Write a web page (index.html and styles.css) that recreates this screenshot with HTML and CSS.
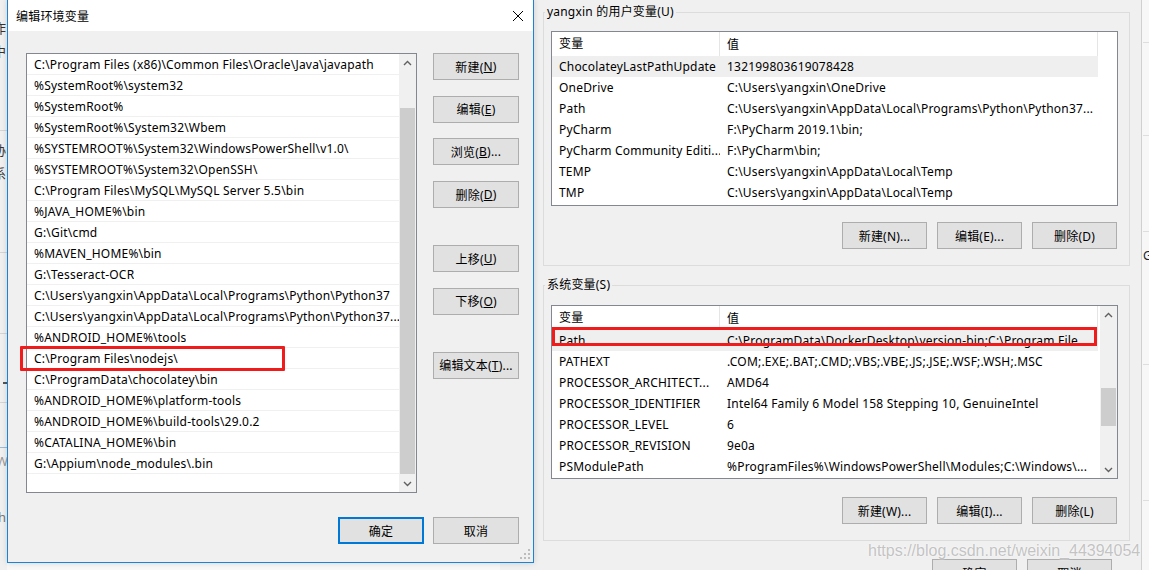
FILE: index.html
```html
<!DOCTYPE html>
<html lang="zh-CN">
  <head>
    <meta charset="utf-8">
    <title>编辑环境变量</title>
    <link rel="stylesheet" href="styles.css">
  </head>
  <body>
    <!-- slivers of whatever sits behind, left edge -->
    <div class="behind-left">
      <span class="sliver-ch ch-1">作</span>
      <span class="sliver-ch ch-2">中</span>
      <hr class="sliver-line line-1">
      <span class="sliver-ch ch-3">协</span>
      <span class="sliver-ch ch-4">系</span>
      <hr class="sliver-line line-2">
      <hr class="sliver-line line-3">
      <hr class="sliver-line line-4 dark">
      <hr class="sliver-line line-5">
      <hr class="sliver-line line-6 blue">
      <span class="sliver-ch ch-5">W</span>
      <span class="sliver-ch ch-6">h</span>
    </div>

    <div class="behind-right">
      <hr class="edge-line e1">
      <hr class="edge-line e2">
      <hr class="edge-line e3">
      <span class="edge-text">Gl</span>
      <hr class="edge-line e4">
      <hr class="edge-line e5">
    </div>

    <!-- environment variables window -->
    <div class="envwin">
      <fieldset class="group">
        <legend>yangxin 的用户变量(U)</legend>
        <div class="listview lv-user">
          <div class="lv-main">
            <div class="lv-head"><span class="c-name">变量</span><span class="c-value">值</span></div>
            <ul class="lv-rows">
              <li class="lv-row is-selected"><span class="c-name">ChocolateyLastPathUpdate</span><span class="c-value">132199803619078428</span></li>
              <li class="lv-row"><span class="c-name">OneDrive</span><span class="c-value">C:\Users\yangxin\OneDrive</span></li>
              <li class="lv-row"><span class="c-name">Path</span><span class="c-value">C:\Users\yangxin\AppData\Local\Programs\Python\Python37...</span></li>
              <li class="lv-row"><span class="c-name">PyCharm</span><span class="c-value">F:\PyCharm 2019.1\bin;</span></li>
              <li class="lv-row"><span class="c-name">PyCharm Community Editi...</span><span class="c-value">F:\PyCharm\bin;</span></li>
              <li class="lv-row"><span class="c-name">TEMP</span><span class="c-value">C:\Users\yangxin\AppData\Local\Temp</span></li>
              <li class="lv-row"><span class="c-name">TMP</span><span class="c-value">C:\Users\yangxin\AppData\Local\Temp</span></li>
            </ul>
          </div>
        </div>
        <div class="btn-row">
          <button class="btn btn--wide">新建(N)...</button>
          <button class="btn btn--wide">编辑(E)...</button>
          <button class="btn btn--wide">删除(D)</button>
        </div>
      </fieldset>

      <fieldset class="group group--sys">
        <legend>系统变量(S)</legend>
        <div class="listview lv-sys">
          <div class="lv-main">
            <div class="lv-head"><span class="c-name">变量</span><span class="c-value">值</span></div>
            <ul class="lv-rows">
              <li class="lv-row is-selected is-marked"><span class="c-name">Path</span><span class="c-value">C:\ProgramData\DockerDesktop\version-bin;C:\Program File...</span></li>
              <li class="lv-row"><span class="c-name">PATHEXT</span><span class="c-value">.COM;.EXE;.BAT;.CMD;.VBS;.VBE;.JS;.JSE;.WSF;.WSH;.MSC</span></li>
              <li class="lv-row"><span class="c-name">PROCESSOR_ARCHITECT...</span><span class="c-value">AMD64</span></li>
              <li class="lv-row"><span class="c-name">PROCESSOR_IDENTIFIER</span><span class="c-value">Intel64 Family 6 Model 158 Stepping 10, GenuineIntel</span></li>
              <li class="lv-row"><span class="c-name">PROCESSOR_LEVEL</span><span class="c-value">6</span></li>
              <li class="lv-row"><span class="c-name">PROCESSOR_REVISION</span><span class="c-value">9e0a</span></li>
              <li class="lv-row"><span class="c-name">PSModulePath</span><span class="c-value">%ProgramFiles%\WindowsPowerShell\Modules;C:\Windows\...</span></li>
            </ul>
          </div>
          <div class="scrollbar sb-sys">
            <div class="sb-btn"><svg width="9" height="6" viewBox="0 0 9 6"><path d="M1 5 L4.5 1.5 L8 5" fill="none" stroke="#606060" stroke-width="1.4"/></svg></div>
            <div class="sb-track"><div class="sb-thumb"></div></div>
            <div class="sb-btn"><svg width="9" height="6" viewBox="0 0 9 6"><path d="M1 1 L4.5 4.5 L8 1" fill="none" stroke="#606060" stroke-width="1.4"/></svg></div>
          </div>
        </div>
        <div class="btn-row">
          <button class="btn btn--wide">新建(W)...</button>
          <button class="btn btn--wide">编辑(I)...</button>
          <button class="btn btn--wide">删除(L)</button>
        </div>
      </fieldset>

      <div class="env-footer">
        <button class="btn btn--wide">确定</button>
        <button class="btn btn--wide">取消</button>
      </div>
    </div>

    <!-- edit dialog on top -->
    <div class="dialog">
      <div class="titlebar">
        <span class="title">编辑环境变量</span>
        <span class="close">
          <svg width="10" height="10" viewBox="0 0 10 10"><path d="M0 0 L10 10 M10 0 L0 10" stroke="#000" stroke-width="1"/></svg>
        </span>
      </div>

      <div class="dlg-body">
        <div class="pathlist">
          <ul class="path-rows">
            <li><span class="txt">C:\Program Files (x86)\Common Files\Oracle\Java\javapath</span></li>
            <li><span class="txt">%SystemRoot%\system32</span></li>
            <li><span class="txt">%SystemRoot%</span></li>
            <li><span class="txt">%SystemRoot%\System32\Wbem</span></li>
            <li><span class="txt">%SYSTEMROOT%\System32\WindowsPowerShell\v1.0\</span></li>
            <li><span class="txt">%SYSTEMROOT%\System32\OpenSSH\</span></li>
            <li><span class="txt">C:\Program Files\MySQL\MySQL Server 5.5\bin</span></li>
            <li><span class="txt">%JAVA_HOME%\bin</span></li>
            <li><span class="txt">G:\Git\cmd</span></li>
            <li><span class="txt">%MAVEN_HOME%\bin</span></li>
            <li><span class="txt">G:\Tesseract-OCR</span></li>
            <li><span class="txt">C:\Users\yangxin\AppData\Local\Programs\Python\Python37</span></li>
            <li><span class="txt">C:\Users\yangxin\AppData\Local\Programs\Python\Python37...</span></li>
            <li><span class="txt">%ANDROID_HOME%\tools</span></li>
            <li class="is-marked"><span class="txt">C:\Program Files\nodejs\</span></li>
            <li><span class="txt">C:\ProgramData\chocolatey\bin</span></li>
            <li><span class="txt">%ANDROID_HOME%\platform-tools</span></li>
            <li><span class="txt">%ANDROID_HOME%\build-tools\29.0.2</span></li>
            <li><span class="txt">%CATALINA_HOME%\bin</span></li>
            <li><span class="txt">G:\Appium\node_modules\.bin</span></li>
          </ul>
          <div class="scrollbar sb-path">
            <div class="sb-btn"><svg width="9" height="6" viewBox="0 0 9 6"><path d="M1 5 L4.5 1.5 L8 5" fill="none" stroke="#606060" stroke-width="1.4"/></svg></div>
            <div class="sb-track"><div class="sb-thumb"></div></div>
            <div class="sb-btn"><svg width="9" height="6" viewBox="0 0 9 6"><path d="M1 1 L4.5 4.5 L8 1" fill="none" stroke="#606060" stroke-width="1.4"/></svg></div>
          </div>
        </div>

        <div class="side-btns">
          <button class="btn">新建(<u>N</u>)</button>
          <button class="btn">编辑(<u>E</u>)</button>
          <button class="btn">浏览(<u>B</u>)...</button>
          <button class="btn">删除(<u>D</u>)</button>
          <button class="btn sep">上移(<u>U</u>)</button>
          <button class="btn">下移(<u>O</u>)</button>
          <button class="btn sep">编辑文本(<u>T</u>)...</button>
        </div>
      </div>

      <div class="dlg-footer">
        <button class="btn btn--default">确定</button>
        <button class="btn">取消</button>
      </div>

      <svg class="grip" width="10" height="10" viewBox="0 0 10 10">
        <rect x="8" y="0" width="2" height="2" fill="#bdbdbd"/>
        <rect x="4" y="4" width="2" height="2" fill="#bdbdbd"/>
        <rect x="8" y="4" width="2" height="2" fill="#bdbdbd"/>
        <rect x="0" y="8" width="2" height="2" fill="#bdbdbd"/>
        <rect x="4" y="8" width="2" height="2" fill="#bdbdbd"/>
        <rect x="8" y="8" width="2" height="2" fill="#bdbdbd"/>
      </svg>
    </div>

    <div class="watermark">https://blog.csdn.net/weixin_44394054</div>
  </body>
</html>
```

FILE: styles.css
```css
html, body {
  margin: 0;
  padding: 0;
}

body {
  width: 1149px;
  height: 570px;
  overflow: hidden;
  position: relative;
  background-color: #f7f7f7;
  font-family: "Noto Sans", "Noto Sans CJK SC", sans-serif;
  font-size: 12px;
  letter-spacing: 0.2px;
  color: #000;
}

ul {
  list-style-type: none;
  margin: 0;
  padding: 0;
}

button {
  font: inherit;
  color: inherit;
  letter-spacing: inherit;
}

.btn {
  display: flex;
  align-items: center;
  justify-content: center;
  box-sizing: border-box;
  height: 27px;
  width: 86px;
  padding: 0;
  background-color: #e1e1e1;
  border: 1px solid #adadad;
  white-space: nowrap;
}

.btn--wide {
  width: 85px;
}

/* ---- things behind the windows ---- */

.behind-left {
  position: absolute;
  left: 0;
  top: 0;
  width: 7px;
  height: 570px;
  overflow: hidden;
  background-color: #f0f0f0;
}

.sliver-ch {
  position: absolute;
  left: -7px;
  font-size: 13px;
  color: #333;
}
.ch-1 { top: 18px; }
.ch-2 { top: 41px; }
.ch-3 { top: 140px; }
.ch-4 { top: 163px; }
.ch-5 { top: 452px; color: #999; left: -4px; }
.ch-6 { top: 508px; color: #777; left: -2px; }

.sliver-line {
  position: absolute;
  left: 0;
  width: 7px;
  margin: 0;
  border: 0;
  border-top: 1px solid #d4d4d4;
}
.line-1 { top: 130px; }
.line-2 { top: 252px; }
.line-3 { top: 333px; }
.line-4 { top: 382px; }
.line-5 { top: 402px; }
.line-6 { top: 447px; }
.sliver-line.dark { border-top: 2px solid #555; width: 4px; left: 3px; }
.sliver-line.blue { border-top-color: #9cb9d6; }

.behind-right {
  position: absolute;
  left: 1143px;
  top: 0;
  width: 6px;
  height: 570px;
  background-color: #f7f7f7;
}

.edge-line {
  position: absolute;
  left: 0;
  width: 6px;
  margin: 0;
  border: 0;
  border-top: 1px solid #dedede;
}
.e1 { top: 42px; }
.e2 { top: 135px; }
.e3 { top: 231px; }
.e4 { top: 364px; }
.e5 { top: 500px; }

.edge-text {
  position: absolute;
  left: 0;
  top: 247px;
  font-size: 12px;
  color: #222;
}

/* ---- environment variables window ---- */

.envwin {
  position: absolute;
  left: 500px;
  top: 0;
  width: 642px;
  height: 570px;
  box-sizing: border-box;
  padding: 4px 0 0 43px;
  background-color: #f0f0f0;
  border-right: 1px solid #d0d0d0;
}

.group {
  width: 587px;
  box-sizing: border-box;
  margin: 0;
  padding: 11px 11px 16px 7px;
  border: 1px solid #dcdcdc;
}

.group legend {
  padding: 0 2px;
  margin-left: -6px;
  line-height: 16px;
  color: #000;
}

.group--sys {
  margin-top: 11px;
  padding-top: 12px;
}

.listview {
  display: flex;
  height: 175px;
  box-sizing: border-box;
  border: 1px solid #828790;
  background-color: #fff;
  overflow: hidden;
}

.lv-sys {
  height: 174px;
}

.lv-main {
  width: 546px;
  flex: none;
}

.lv-head {
  display: flex;
  height: 24px;
  align-items: center;
  border-right: 1px solid #e5e5e5;
}

.lv-head .c-name {
  border-right: 1px solid #e5e5e5;
  height: 24px;
  line-height: 24px;
}

.lv-row {
  display: flex;
  height: 21px;
  align-items: center;
  white-space: nowrap;
}

.c-name {
  width: 168px;
  flex: none;
  box-sizing: border-box;
  padding-left: 7px;
  overflow: hidden;
}

.c-value {
  flex: 1;
  padding-left: 7px;
  overflow: hidden;
}

.lv-row.is-selected {
  background-color: #efefef;
}

.lv-row.is-marked {
  position: relative;
}

.lv-row.is-marked::after {
  content: "";
  position: absolute;
  left: 0;
  top: -3px;
  width: 545px;
  height: 19px;
  box-sizing: border-box;
  border: 3px solid #f01c1c;
}

.btn-row {
  display: flex;
  justify-content: flex-end;
  gap: 10px;
  margin-top: 16px;
  padding-right: 1px;
}

.group--sys .btn-row {
  margin-top: 18px;
}

.env-footer {
  display: flex;
  justify-content: flex-end;
  gap: 10px;
  width: 569px;
  margin-top: 18px;
}

/* ---- scrollbars ---- */

.scrollbar {
  width: 17px;
  flex: none;
  display: flex;
  flex-direction: column;
  background-color: #f0f0f0;
}

.sb-btn {
  height: 17px;
  display: flex;
  align-items: center;
  justify-content: center;
}

.sb-track {
  flex: 1;
}

.sb-thumb {
  background-color: #cdcdcd;
  margin: 0 1px;
}

.sb-path .sb-thumb {
  margin-top: 37px;
  height: 366px;
}

.sb-sys .sb-thumb {
  margin-top: 65px;
  height: 38px;
}

.lv-sys .scrollbar {
  margin-left: auto;
}

/* ---- edit dialog ---- */

.dialog {
  position: absolute;
  left: 7px;
  top: -1px;
  width: 527px;
  height: 564px;
  box-sizing: border-box;
  border: 1px solid #1883d7;
  background-color: #f0f0f0;
  box-shadow: 0 0 6px rgba(0, 0, 0, 0.15);
}

.titlebar {
  display: flex;
  align-items: center;
  height: 31px;
  background-color: #fff;
}

.title {
  flex: 1;
  padding-left: 8px;
}

.close {
  width: 46px;
  height: 31px;
  display: flex;
  align-items: center;
  justify-content: center;
  margin-right: -8px;
}

.dlg-body {
  display: flex;
  gap: 16px;
  padding: 22px 14px 0 18px;
}

.pathlist {
  display: flex;
  width: 391px;
  height: 440px;
  box-sizing: border-box;
  border: 1px solid #828790;
  background-color: #fff;
}

.path-rows {
  flex: 1;
  min-width: 0;
}

.path-rows li {
  position: relative;
  height: 21px;
  box-sizing: border-box;
  border-bottom: 1px solid #f0f0f0;
  display: flex;
  align-items: center;
}

.path-rows .txt {
  padding-left: 7px;
  white-space: nowrap;
  overflow: hidden;
}

.path-rows li.is-marked::after {
  content: "";
  position: absolute;
  left: -7px;
  top: -2px;
  width: 265px;
  height: 25px;
  box-sizing: border-box;
  border: 3px solid #f01c1c;
  border-radius: 1px;
}

.side-btns {
  display: flex;
  flex-direction: column;
}

.side-btns .btn + .btn {
  margin-top: 15.7px;
}

.side-btns .btn.sep {
  margin-top: 37px;
}

.dlg-footer {
  display: flex;
  justify-content: flex-end;
  gap: 9px;
  margin-top: 24px;
  padding-right: 14px;
}

.btn--default {
  border: 2px solid #0078d7;
}

.grip {
  position: absolute;
  right: 3px;
  bottom: 3px;
}

.watermark {
  position: absolute;
  left: 868px;
  top: 542px;
  font-family: "Liberation Sans", Arial, sans-serif;
  font-size: 16px;
  letter-spacing: 0;
  color: rgba(185, 185, 185, 0.85);
  text-shadow: 0 0 2px #fff;
  white-space: nowrap;
}
```
